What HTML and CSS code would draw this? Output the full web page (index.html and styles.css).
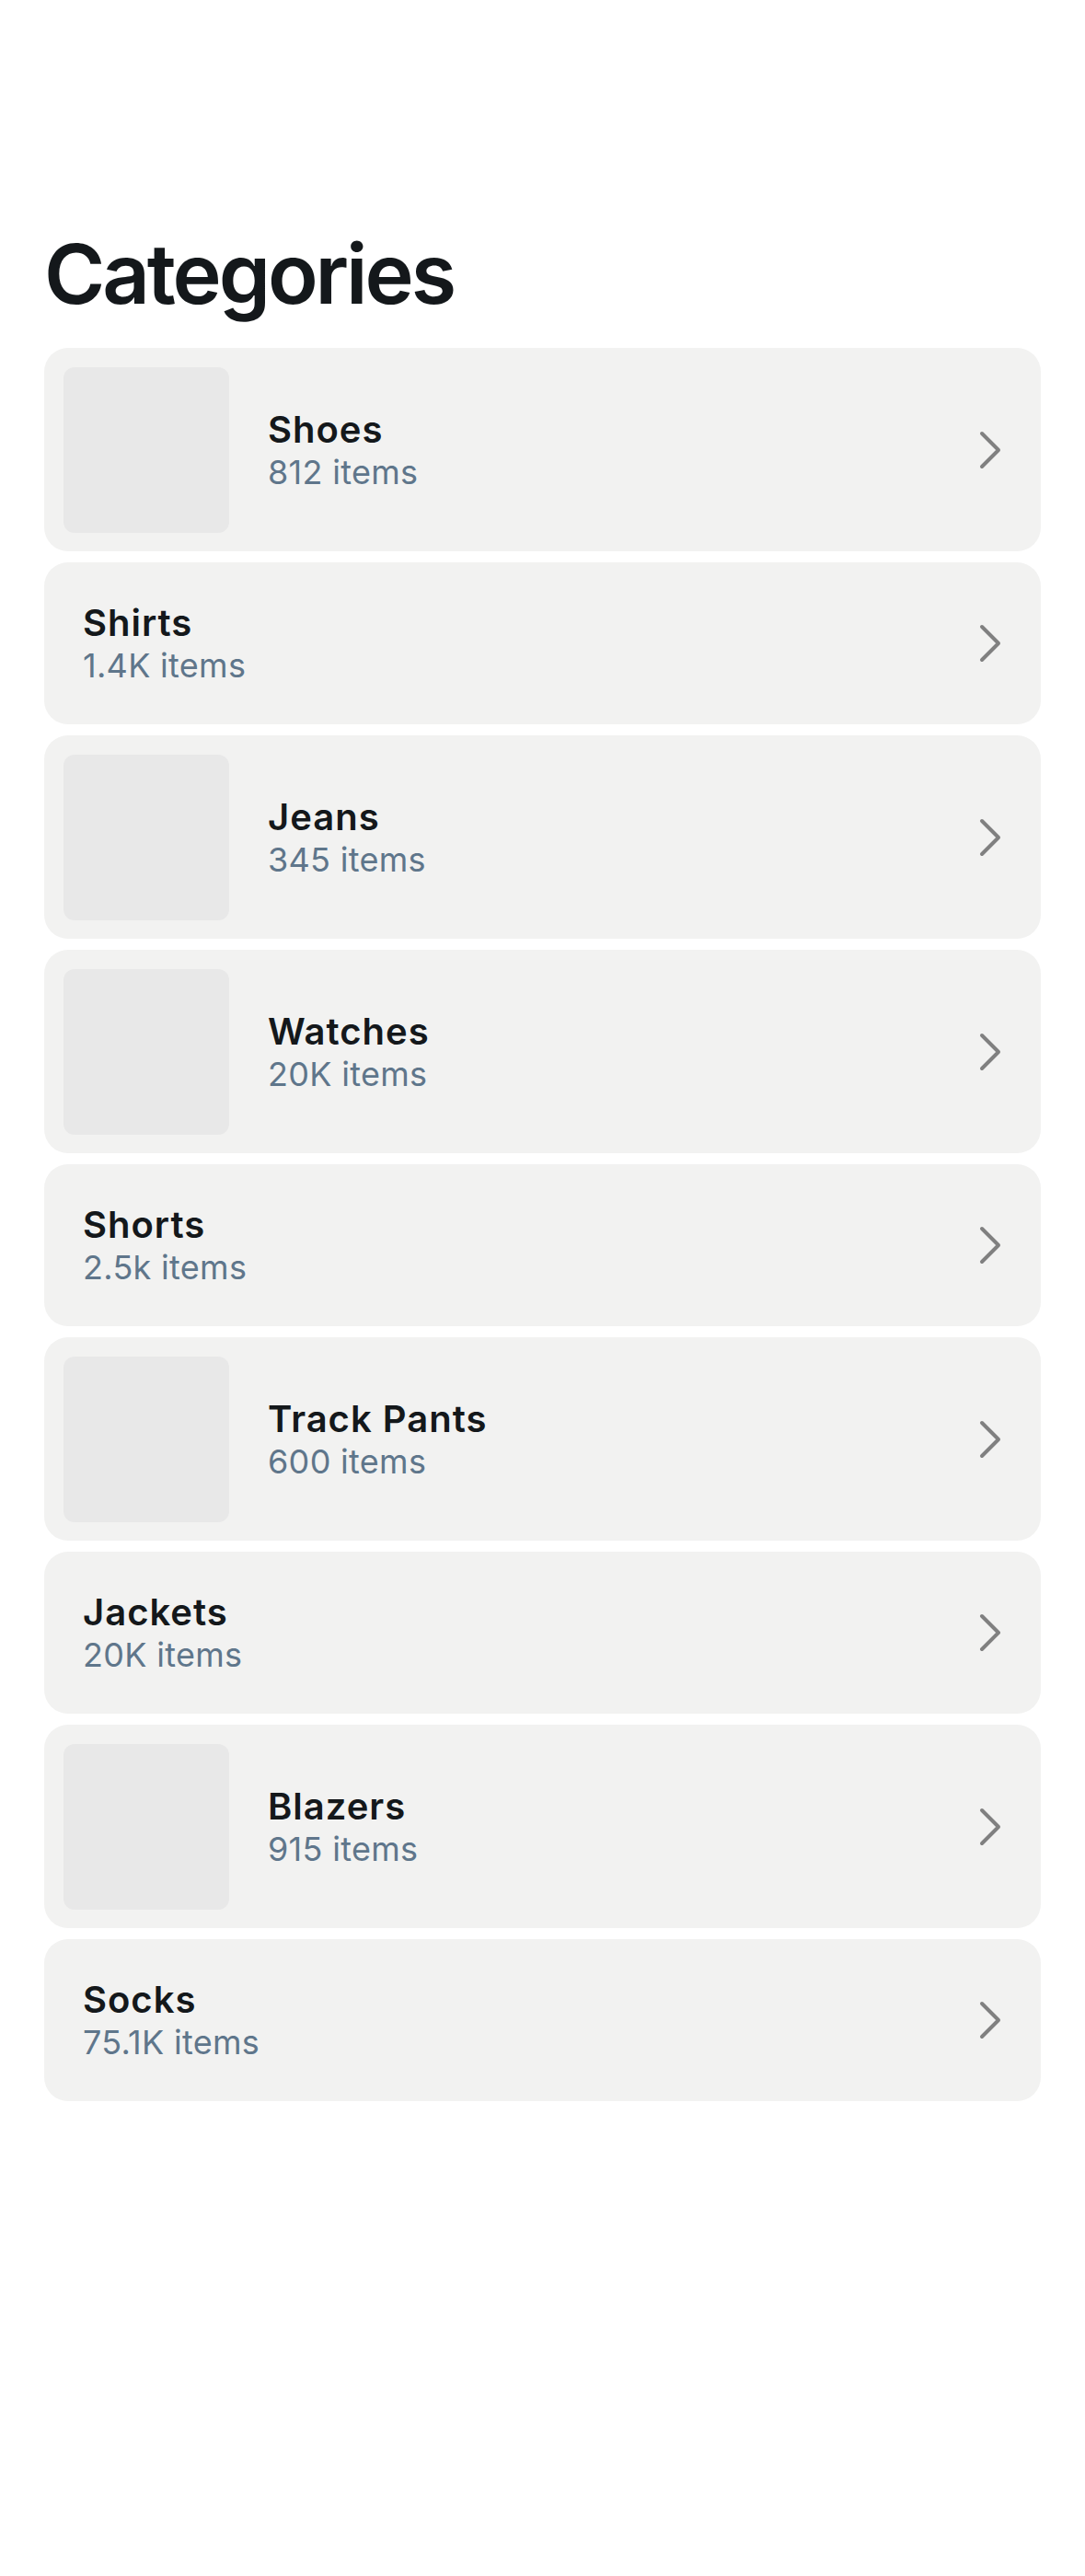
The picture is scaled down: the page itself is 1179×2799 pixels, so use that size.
FILE: index.html
```html
<!DOCTYPE html>
<html lang="en">
<head>
<meta charset="utf-8">
<title>Categories</title>
<link rel="stylesheet" href="styles.css">
</head>
<body>
<main class="screen">
  <h1 class="page-title">Categories</h1>
  <ul class="list">
    <li class="card card--image">
      <div class="thumb"></div>
      <div class="info"><div class="name">Shoes</div><div class="count">812 items</div></div>
      <svg class="chev" viewBox="0 0 24 42" width="24" height="42"><path d="M3 3 L21 21 L3 39"/></svg>
    </li>
    <li class="card card--text">
      <div class="info"><div class="name">Shirts</div><div class="count">1.4K items</div></div>
      <svg class="chev" viewBox="0 0 24 42" width="24" height="42"><path d="M3 3 L21 21 L3 39"/></svg>
    </li>
    <li class="card card--image">
      <div class="thumb"></div>
      <div class="info"><div class="name">Jeans</div><div class="count">345 items</div></div>
      <svg class="chev" viewBox="0 0 24 42" width="24" height="42"><path d="M3 3 L21 21 L3 39"/></svg>
    </li>
    <li class="card card--image">
      <div class="thumb"></div>
      <div class="info"><div class="name">Watches</div><div class="count">20K items</div></div>
      <svg class="chev" viewBox="0 0 24 42" width="24" height="42"><path d="M3 3 L21 21 L3 39"/></svg>
    </li>
    <li class="card card--text">
      <div class="info"><div class="name">Shorts</div><div class="count">2.5k items</div></div>
      <svg class="chev" viewBox="0 0 24 42" width="24" height="42"><path d="M3 3 L21 21 L3 39"/></svg>
    </li>
    <li class="card card--image">
      <div class="thumb"></div>
      <div class="info"><div class="name">Track Pants</div><div class="count">600 items</div></div>
      <svg class="chev" viewBox="0 0 24 42" width="24" height="42"><path d="M3 3 L21 21 L3 39"/></svg>
    </li>
    <li class="card card--text">
      <div class="info"><div class="name">Jackets</div><div class="count">20K items</div></div>
      <svg class="chev" viewBox="0 0 24 42" width="24" height="42"><path d="M3 3 L21 21 L3 39"/></svg>
    </li>
    <li class="card card--image">
      <div class="thumb"></div>
      <div class="info"><div class="name">Blazers</div><div class="count">915 items</div></div>
      <svg class="chev" viewBox="0 0 24 42" width="24" height="42"><path d="M3 3 L21 21 L3 39"/></svg>
    </li>
    <li class="card card--text">
      <div class="info"><div class="name">Socks</div><div class="count">75.1K items</div></div>
      <svg class="chev" viewBox="0 0 24 42" width="24" height="42"><path d="M3 3 L21 21 L3 39"/></svg>
    </li>
  </ul>
</main>
</body>
</html>
```

FILE: styles.css
```css
html, body {
  margin: 0;
  padding: 0;
  background: #ffffff;
}

body {
  font-family: Inter, "Noto Sans", "Liberation Sans", sans-serif;
  color: #14181b;
}

.screen {
  width: 1179px;
  min-height: 2799px;
  box-sizing: border-box;
  padding: 243px 48px 0 48px;
}

.page-title {
  margin: 0 0 26px 0;
  font-size: 90px;
  font-weight: 600;
  line-height: 109px;
  letter-spacing: -3.1px;
  color: #14181b;
}

.list {
  list-style: none;
  margin: 0;
  padding: 0;
  display: flex;
  flex-direction: column;
  gap: 12px;
}

.card {
  display: flex;
  align-items: center;
  background: #f2f2f1;
  border-radius: 26px;
  box-sizing: border-box;
}

.card--image {
  height: 221px;
  padding: 0 43px 0 21px;
}

.card--text {
  height: 176px;
  padding: 0 43px 0 42px;
}

.thumb {
  width: 180px;
  height: 180px;
  border-radius: 12px;
  background: #e8e8e8;
  flex: none;
  margin-right: 42px;
}

.info {
  flex: 1;
  display: flex;
  flex-direction: column;
}

.name {
  font-size: 40px;
  font-weight: 600;
  line-height: 48px;
  letter-spacing: 1px;
  color: #14181b;
}

.count {
  font-size: 36px;
  font-weight: 400;
  line-height: 44px;
  letter-spacing: 0.3px;
  color: #5f768b;
}

.chev {
  flex: none;
  display: block;
}

.chev path {
  fill: none;
  stroke: #808080;
  stroke-width: 4;
  stroke-linecap: round;
  stroke-linejoin: round;
}
```
